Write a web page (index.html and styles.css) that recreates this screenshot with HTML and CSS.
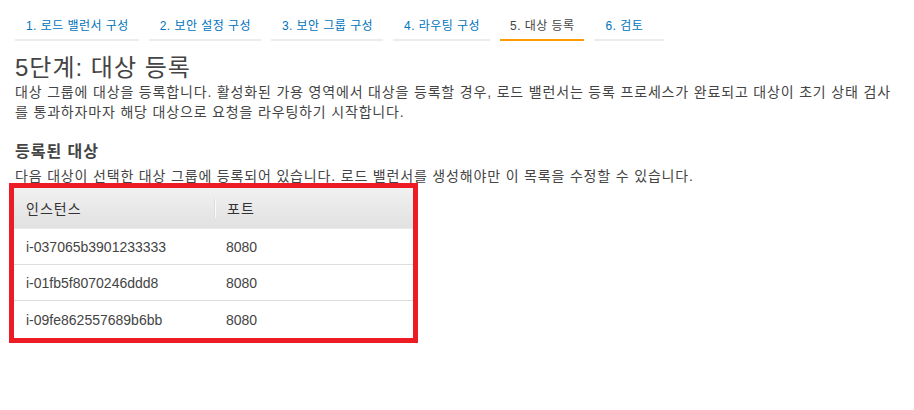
FILE: index.html
```html
<!DOCTYPE html>
<html lang="ko">
<head>
<meta charset="utf-8">
<title>5단계: 대상 등록</title>
<link rel="stylesheet" href="styles.css">
</head>
<body>
<nav class="tabs">
  <a class="tab">1. 로드 밸런서 구성</a>
  <a class="tab">2. 보안 설정 구성</a>
  <a class="tab">3. 보안 그룹 구성</a>
  <a class="tab">4. 라우팅 구성</a>
  <a class="tab tab-active">5. 대상 등록</a>
  <a class="tab">6. 검토</a>
</nav>
<main class="content">
  <h1 class="title">5단계: 대상 등록</h1>
  <p class="intro">대상 그룹에 대상을 등록합니다. 활성화된 가용 영역에서 대상을 등록할 경우, 로드 밸런서는 등록 프로세스가 완료되고 대상이 초기 상태 검사를 통과하자마자 해당 대상으로 요청을 라우팅하기 시작합니다.</p>
  <h2 class="section-title">등록된 대상</h2>
  <p class="desc">다음 대상이 선택한 대상 그룹에 등록되어 있습니다. 로드 밸런서를 생성해야만 이 목록을 수정할 수 있습니다.</p>
  <div class="highlight">
    <div class="grid">
      <div class="th th-ko">인스턴스</div>
      <div class="th th-sep th-ko">포트</div>
      <div class="td">i-037065b3901233333</div>
      <div class="td td-port">8080</div>
      <div class="td">i-01fb5f8070246ddd8</div>
      <div class="td td-port">8080</div>
      <div class="td td-last">i-09fe862557689b6bb</div>
      <div class="td td-port td-last">8080</div>
    </div>
  </div>
</main>
</body>
</html>
```

FILE: styles.css
```css
* {
  box-sizing: border-box;
}

body {
  margin: 0;
  background: #fff;
  color: #444;
  font-family: "Liberation Sans", "Noto Sans CJK KR", Arial, sans-serif;
}

.tabs {
  display: flex;
  gap: 10px;
  padding: 18px 15px 0;
}

.tab {
  display: block;
  min-width: 70px;
  padding: 0 10px 5px 11px;
  font-size: 12px;
  line-height: 16px;
  letter-spacing: 0.45px;
  color: #0073bb;
  border-bottom: 2px solid #eaeded;
  white-space: nowrap;
}

.tab-active {
  color: #444;
  border-bottom-color: #ff9900;
  padding-left: 10px;
}

.content {
  padding: 0 15px;
}

.title {
  margin: 13px 0 0;
  font-size: 24px;
  line-height: 28px;
  font-weight: normal;
  letter-spacing: 1px;
  color: #444;
}

.intro {
  margin: 0;
  font-size: 14px;
  line-height: 20px;
  letter-spacing: 0.83px;
}

.section-title {
  margin: 20px 0 0;
  font-size: 16px;
  line-height: 20px;
  font-weight: bold;
  letter-spacing: 1px;
  color: #444;
}

.desc {
  margin: 6px 0 -1px;
  font-size: 14px;
  line-height: 16px;
  letter-spacing: 0.83px;
}

.highlight {
  width: 409px;
  margin-left: -6px;
  border: 5px solid #ed1c24;
  background: #fff;
}

.grid {
  display: grid;
  grid-template-columns: 201px 1fr;
  font-size: 14px;
}

.th {
  height: 41px;
  display: flex;
  align-items: center;
  padding-left: 12px;
  background: linear-gradient(#f1f1f1, #e1e1e1);
  border-bottom: 1px solid #ebebeb;
  color: #333;
}

.th-ko {
  letter-spacing: 1px;
}

.th-sep {
  position: relative;
  padding-left: 12px;
}

.th-sep::before {
  content: "";
  position: absolute;
  left: 0;
  top: 11px;
  width: 1px;
  height: 19px;
  background: #fbfbfb;
  box-shadow: -1px 0 0 #dcdcdc;
}

.td {
  height: 36px;
  display: flex;
  align-items: center;
  padding-left: 12px;
  border-bottom: 1px solid #dddddd;
}

.td-port {
  padding-left: 11px;
}

.td-last {
  border-bottom: none;
  height: 37px;
}
```
